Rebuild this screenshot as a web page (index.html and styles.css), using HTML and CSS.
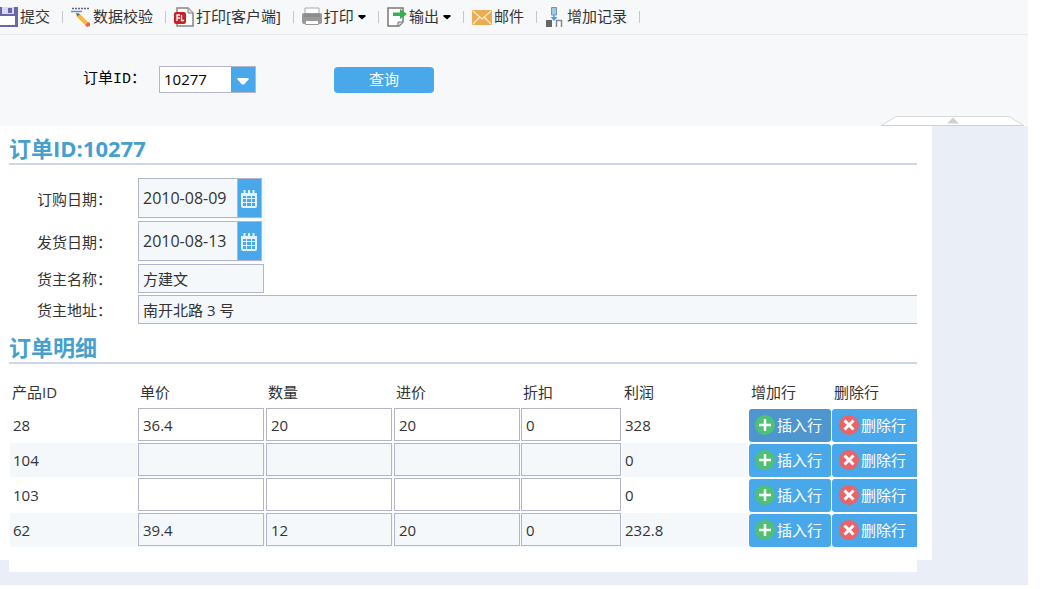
FILE: index.html
```html
<!DOCTYPE html>
<html lang="zh-CN">
<head>
<meta charset="utf-8">
<title>订单</title>
<link rel="stylesheet" href="styles.css">
</head>
<body>
<svg class="defs" aria-hidden="true">
  <symbol id="calendar" viewBox="0 0 18 18">
    <path d="M1 3h16v13a2 2 0 0 1-2 2H3a2 2 0 0 1-2-2zM3.500 0h2v4h-2zM8 0h2v4H8zM12.500 0h2v4h-2z" fill="#e4f2fc"/>
    <path d="M3 6h3v2H3zM7 6h4v2H7zM12 6h3v2h-3zM3 9h3v3H3zM7 9h4v3H7zM12 9h3v3h-3zM3 13h3v3H3zM7 13h4v3H7zM12 13h3v3h-3z" fill="#49a8ea"/>
  </symbol>
  <symbol id="plus" viewBox="0 0 20 20">
    <circle cx="10" cy="10" r="10" fill="#4fc176"/>
    <path d="M10 4v12M4 10h12" stroke="#fff" stroke-width="2.500"/>
  </symbol>
  <symbol id="cross" viewBox="0 0 20 20">
    <circle cx="10" cy="10" r="10" fill="#e96368"/>
    <path d="M5.500 5.500l9 9M14.500 5.500l-9 9" stroke="#fff" stroke-width="3"/>
  </symbol>
  <symbol id="caret" viewBox="0 0 8 5"><path d="M1 0h6l1 1-4 3.500L0 1z" fill="#000"/></symbol>
</svg>
<div class="app">
  <nav class="toolbar">
    <button class="tool" type="button">
      <svg class="icon-save" viewBox="0 0 18 20"><path d="M0 0h18v20H0z" fill="#6767a9"/><path d="M0 9h15v9H0z" fill="#fff"/><path d="M2 0h12v7H2z" fill="#d9d9ee"/><path d="M8 1h4v5H8z" fill="#6767a9"/></svg>
      <span>提交</span>
    </button>
    <button class="tool" type="button">
      <svg class="icon" viewBox="0 0 20 20"><path d="M1 1.500h17" stroke="#666" stroke-width="1.500" stroke-dasharray="2 1"/><path d="M0 4.500h11" stroke="#4a9ae0" stroke-width="1.500"/><path d="M5 6l4 1 8 8-3 3-8-8z" fill="#f8b93e"/><path d="M5 6l4 1-2.500 2.500z" fill="#6a6355"/><path d="M14 18l3-3 2 1v3l-3 1z" fill="#f0604c"/></svg>
      <span>数据校验</span>
    </button>
    <button class="tool" type="button">
      <svg class="icon" viewBox="0 0 20 20"><path d="M3 1h11l5 5v13H3z" fill="#fff" stroke="#858585" stroke-width="1.500"/><path d="M14 1v5h5" fill="#ddd" stroke="#858585"/><rect x="0" y="5" width="12" height="12" rx="2" fill="#cb2229"/><path d="M3 14V8h3M3 11h3M7.500 8v5.500H10" fill="none" stroke="#fff" stroke-width="1.300"/></svg>
      <span>打印[客户端]</span>
    </button>
    <button class="tool" type="button">
      <svg class="icon" viewBox="0 0 20 20"><path d="M3 1h14v6H3z" fill="#fff" stroke="#aaa"/><rect y="6" width="20" height="11" rx="2" fill="#999"/><path d="M2 7h16v3H2z" fill="#8c8c8c"/><path d="M3.500 13.500h13v4h-13z" fill="#fff" stroke="#999"/></svg>
      <span>打印</span>
      <svg class="caret"><use href="#caret"/></svg>
    </button>
    <button class="tool" type="button">
      <svg class="icon" viewBox="0 0 20 20"><path d="M1 1h15v14l-4 4H1z" fill="#fff" stroke="#777" stroke-width="1.500"/><path d="M11 19v-4h5" fill="#ddd" stroke="#777"/><path d="M6 5.500h7V2l7 5-7 5V9H6z" fill="#3bae55"/></svg>
      <span>输出</span>
      <svg class="caret"><use href="#caret"/></svg>
    </button>
    <button class="tool" type="button">
      <svg class="icon" viewBox="0 0 20 20"><rect y="3" width="20" height="15" rx="1" fill="#ebac52"/><path d="M1 4l9 8 9-8M1 17l7-7M19 17l-7-7" fill="none" stroke="#fff0d2" stroke-width="1.200"/></svg>
      <span>邮件</span>
    </button>
    <button class="tool" type="button">
      <svg class="icon" viewBox="0 0 20 20"><path d="M6.500.500h5V8h-5z" fill="#9ccbea" stroke="#7793a6"/><path d="M9 8v5" stroke="#4a9af0" stroke-width="1.500"/><path d="M5.500 10h7L9 14z" fill="#4a9af0"/><path d="M1 13h6v7H1z" fill="#666"/><path d="M11.500 20v-6.500h5V20" fill="#fff" stroke="#888" stroke-width="1.500"/></svg>
      <span>增加记录</span>
    </button>
  </nav>

  <form class="query">
    <label class="query-label" for="order">订单ID：</label>
    <div class="combo">
      <select id="order"><option>10277</option></select>
      <span class="combo-arrow"><svg viewBox="0 0 12 7"><path d="M1 0h10l1 1-5 5.500H5L0 1z" fill="#fff"/></svg></span>
    </div>
    <button class="search" type="button">查询</button>
    <button class="fold" type="button" aria-label="收起">
      <svg viewBox="0 0 143 10"><path d="M1 9L15 .500h113L142 9" fill="#fff" stroke="#d9d9d9"/><path d="M0 9.500h143" stroke="#d0d0d0"/><path d="M66 7.500L72 1.500l6 6z" fill="#d0d0d0"/></svg>
    </button>
  </form>

  <main class="workspace">
    <div class="sheet">
      <h1 class="title">订单ID:10277</h1>
      <div class="fields">
        <label for="ordered">订购日期：</label>
        <div class="date"><input id="ordered" type="text" value="2010-08-09"><button type="button" aria-label="选择订购日期"><svg><use href="#calendar"/></svg></button></div>
        <label for="shipped">发货日期：</label>
        <div class="date"><input id="shipped" type="text" value="2010-08-13"><button type="button" aria-label="选择发货日期"><svg><use href="#calendar"/></svg></button></div>
        <label for="name">货主名称：</label>
        <input class="text name" id="name" type="text" value="方建文">
        <label for="address">货主地址：</label>
        <input class="text address" id="address" type="text" value="南开北路 3 号">
      </div>
      <h2 class="title">订单明细</h2>
      <table class="lines">
        <colgroup><col class="c-wide"><col class="c-wide"><col class="c-wide"><col class="c-mid"><col class="c-rate"><col class="c-mid"><col class="c-add"><col class="c-del"></colgroup>
        <thead><tr><th>产品ID</th><th>单价</th><th>数量</th><th>进价</th><th>折扣</th><th>利润</th><th>增加行</th><th>删除行</th></tr></thead>
        <tbody>
          <tr><td>28</td><td class="edit"><input aria-label="单价" value="36.4"></td><td class="edit"><input aria-label="数量" value="20"></td><td class="edit"><input aria-label="进价" value="20"></td><td class="edit"><input aria-label="折扣" value="0"></td><td>328</td><td class="act"><button class="active" type="button"><svg><use href="#plus"/></svg>插入行</button></td><td class="act"><button class="del" type="button"><svg><use href="#cross"/></svg>删除行</button></td></tr>
          <tr><td>104</td><td class="edit"><input aria-label="单价"></td><td class="edit"><input aria-label="数量"></td><td class="edit"><input aria-label="进价"></td><td class="edit"><input aria-label="折扣"></td><td>0</td><td class="act"><button type="button"><svg><use href="#plus"/></svg>插入行</button></td><td class="act"><button class="del" type="button"><svg><use href="#cross"/></svg>删除行</button></td></tr>
          <tr><td>103</td><td class="edit"><input aria-label="单价"></td><td class="edit"><input aria-label="数量"></td><td class="edit"><input aria-label="进价"></td><td class="edit"><input aria-label="折扣"></td><td>0</td><td class="act"><button type="button"><svg><use href="#plus"/></svg>插入行</button></td><td class="act"><button class="del" type="button"><svg><use href="#cross"/></svg>删除行</button></td></tr>
          <tr><td>62</td><td class="edit"><input aria-label="单价" value="39.4"></td><td class="edit"><input aria-label="数量" value="12"></td><td class="edit"><input aria-label="进价" value="20"></td><td class="edit"><input aria-label="折扣" value="0"></td><td>232.8</td><td class="act"><button type="button"><svg><use href="#plus"/></svg>插入行</button></td><td class="act"><button class="del" type="button"><svg><use href="#cross"/></svg>删除行</button></td></tr>
        </tbody>
      </table>
    </div>
    <div class="sheet-tail"></div>
  </main>
</div>
</body>
</html>
```
FILE: styles.css
```css
* { box-sizing: border-box; }
body {
  margin: 0;
  background: #fff;
  color: #333;
  font: 15px/20px "Open Sans", "Noto Sans CJK SC", sans-serif;
}
button, input, select { font: inherit; color: inherit; margin: 0; }
button { border: 0; padding: 0; background: none; cursor: pointer; }
svg { display: block; flex: none; }
.defs { position: absolute; width: 0; height: 0; }
.app { margin-right: 21px; }

.toolbar {
  display: flex;
  align-items: center;
  height: 35px;
  background: #f6f8fa;
  border-bottom: 1px solid #e6e9ec;
}
.tool { display: flex; align-items: center; gap: 2px; white-space: nowrap; }
.tool span { padding-bottom: 2px; }
.tool::after {
  content: "";
  width: 1px;
  height: 12px;
  margin: 0 8px 0 10px;
  background: #c4c6c8;
}
.icon-save { width: 18px; height: 20px; }
.icon { width: 20px; height: 20px; }
.caret { width: 8px; height: 5px; margin-left: 2px; }

.query {
  position: relative;
  display: flex;
  align-items: center;
  height: 91px;
  padding: 0 0 2px 83px;
  background: #f6f8fa;
}
.query-label {
  width: 76px;
  color: #000;
  font-family: "Liberation Mono", "Noto Sans CJK SC", monospace;
}
.combo { position: relative; width: 97px; height: 27px; }
.combo select {
  width: 100%;
  height: 100%;
  padding: 0 28px 2px 4px;
  border: 1px solid #b4b4ca;
  border-radius: 0;
  background: #fff;
  color: #000;
  appearance: none;
}
.combo-arrow {
  position: absolute;
  top: 1px;
  right: 1px;
  bottom: 1px;
  width: 24px;
  display: flex;
  align-items: center;
  justify-content: center;
  background: #49a8ea;
  pointer-events: none;
}
.combo-arrow svg { width: 12px; height: 7px; margin-top: 3px; }
.search {
  width: 100px;
  height: 26px;
  margin-left: 78px;
  padding-bottom: 2px;
  border-radius: 4px;
  background: #49a8ea;
  color: #fff;
}
.fold { position: absolute; right: 4px; bottom: 0; }
.fold svg { width: 143px; height: 10px; }

.workspace { padding-bottom: 13px; background: #eaeef7; }
.sheet { margin-right: 96px; padding: 10px 15px 12px 9px; background: #fff; }
.sheet-tail { height: 12px; margin: 0 111px 0 9px; background: #fff; }
.title {
  margin: 0;
  padding-bottom: 3px;
  border-bottom: 2px solid #ccd5e9;
  color: #479fcd;
  font-size: 22px;
  line-height: 24px;
  font-weight: 700;
}
.fields {
  display: grid;
  grid-template-columns: 129px 1fr;
  row-gap: 2px;
  align-items: center;
  padding: 13px 0 11px;
}
.fields label { padding-left: 28px; }
.date { display: flex; width: 127px; height: 41px; background: #f4f8fb; }
.date input {
  width: 100px;
  height: 40px;
  padding: 0 4px;
  border: 1px solid #b4b4ca;
  border-radius: 0;
  background: #f4f8fb;
  font-size: 16px;
}
.date button {
  display: flex;
  align-items: center;
  justify-content: center;
  width: 24px;
  height: 40px;
  padding: 2px 2px 0 0;
  border: solid #b4b4ca;
  border-width: 1px 1px 1px 0;
  background: #49a8ea;
}
.date svg { width: 18px; height: 18px; }
.text {
  height: 29px;
  padding: 0 4px;
  border: 1px solid #b4b4ca;
  border-radius: 0;
  background: #f4f8fb;
}
.name { width: 126px; }
.address { width: 100%; border-right: 0; }

.lines {
  width: calc(100% + 1px);
  table-layout: fixed;
  border-collapse: separate;
  border-spacing: 1px;
  margin-top: 12px;
}
.c-wide { width: 127px; }
.c-mid { width: 126px; }
.c-rate { width: 100px; }
.c-add { width: 82px; }
.lines th { height: 30px; padding: 0 2px; font-weight: 400; text-align: left; }
.lines td { height: 34px; padding: 0 3px; }
.lines tbody tr:nth-child(even) td { background: #f4f8fb; }
.lines .edit { padding: 0 1px 1px 0; }
.lines .act, .lines tbody tr:nth-child(even) .act { padding: 0; background: none; }
.lines input {
  display: block;
  width: 100%;
  height: 33px;
  padding: 0 4px;
  border: 1px solid #b4b4ca;
  border-radius: 0;
  background: transparent;
}
.lines td:nth-child(5), .lines td:nth-child(4) { padding-right: 0; }
.lines button {
  display: flex;
  align-items: center;
  gap: 2px;
  width: 100%;
  height: 33px;
  padding-left: 6px;
  border-radius: 3px;
  background: #49a8ea;
  color: #fff;
  white-space: nowrap;
}
.lines .active { background: #4e96d0; }
.lines .del { padding-left: 7px; border-radius: 3px 0 0 3px; }
.lines button svg { width: 20px; height: 20px; }
```
